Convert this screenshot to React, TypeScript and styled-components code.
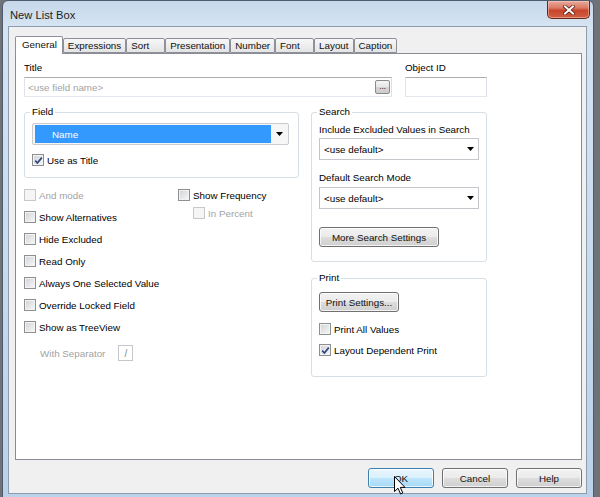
import React from "react";
import styled, { createGlobalStyle } from "styled-components";

const GlobalStyle = createGlobalStyle`
  html, body { margin: 0; padding: 0; background: #6f7378; overflow: hidden; }
  body { font-family: "Liberation Sans", Arial, sans-serif; font-size: 9.8px; color: #000; }
  * { box-sizing: border-box; }
`;

const Window = styled.div`
  width: 592px;
  height: 502px;
  margin-left: 2px;
  border: 1px solid #4d5b6c;
  border-radius: 6px 6px 0 0;
  background: linear-gradient(to bottom, #c6d8eb 0px, #d6e4f2 26px, #c6d9ed 60%, #bbd2ea 100%);
  display: flex;
  flex-direction: column;
  padding: 0 6px 7px 5px;
`;

const TitleBar = styled.div`
  height: 25px;
  display: flex;
  align-items: flex-start;
  justify-content: space-between;
  padding-left: 2px;
  flex-shrink: 0;
`;

const TitleText = styled.div`
  font-size: 11.2px;
  line-height: 13px;
  margin-top: 8px;
  color: #1b1f26;
`;

const CloseButton = styled.div`
  width: 43px;
  height: 18px;
  margin-right: -3px;
  border: 1px solid #6b2418;
  border-top: none;
  border-radius: 0 0 5px 5px;
  background: linear-gradient(to bottom, #e8aa9c 0%, #dc7b66 40%, #c8452b 55%, #d0603f 100%);
  box-shadow: inset 0 0 0 1px rgba(255, 220, 210, 0.45);
  display: flex;
  align-items: center;
  justify-content: center;
`;

const Client = styled.div`
  flex: 1;
  background: #f0f0f0;
  border: 1px solid #8d9db0;
  display: flex;
  flex-direction: column;
  padding: 9px 4px 5px 6px;
`;

const TabStrip = styled.div`
  display: flex;
  align-items: flex-end;
  height: 18px;
  margin-bottom: -1px;
  position: relative;
  z-index: 1;
`;

const Tab = styled.div<{ $active?: boolean }>`
  min-width: 39px;
  height: ${(p) => (p.$active ? 18 : 15)}px;
  margin-bottom: ${(p) => (p.$active ? 0 : 1)}px;
  padding: ${(p) => (p.$active ? "0 5px 2px 6px" : "0 4px 0 4px")};
  border: 1px solid #8e9199;
  border-bottom: ${(p) => (p.$active ? "none" : "1px solid #8e9199")};
  border-radius: 2px 2px 0 0;
  background: ${(p) => (p.$active ? "#ffffff" : "linear-gradient(to bottom, #f7f7f7, #e4e4e4)")};
  display: flex;
  align-items: center;
  white-space: nowrap;
  line-height: 12px;
  color: #111;
`;

const Panel = styled.div`
  flex: 1;
  background: #ffffff;
  border: 1px solid #898c95;
  padding: 7px 0 0 8px;
  display: flex;
  flex-direction: column;
`;

const TopRow = styled.div`
  display: flex;
  gap: 13px;
`;

const LabeledBlock = styled.div<{ $w: number }>`
  width: ${(p) => p.$w}px;
  display: flex;
  flex-direction: column;
`;

const FieldLabel = styled.div`
  line-height: 13px;
  margin-bottom: 3px;
`;

const TextBox = styled.div<{ $muted?: boolean }>`
  height: 20px;
  border: 1px solid;
  border-color: #abadb3 #dbdfe6 #e3e9ef #e2e3ea;
  background: #fff;
  display: flex;
  align-items: center;
  padding: 0 1px 0 3px;
  color: ${(p) => (p.$muted ? "#a3a3a3" : "#000")};
`;

const TextBoxValue = styled.span`
  flex: 1;
`;

const DotsButton = styled.div`
  width: 15px;
  height: 14px;
  border: 1px solid #8a8a8a;
  border-radius: 2px;
  background: linear-gradient(to bottom, #f4f4f4 0%, #e6e6e6 50%, #d6d6d6 51%, #cccccc 100%);
  font-size: 9px;
  line-height: 9px;
  padding-top: 1px;
  text-align: center;
  color: #333;
  letter-spacing: -0.3px;
`;

const Columns = styled.div`
  display: flex;
  gap: 12px;
  margin-top: 9px;
`;

const Column = styled.div<{ $w: number }>`
  width: ${(p) => p.$w}px;
  display: flex;
  flex-direction: column;
`;

const GroupBox = styled.fieldset<{ $pad: string; $mt?: number }>`
  margin: ${(p) => p.$mt ?? 0}px 0 0 0;
  padding: ${(p) => p.$pad};
  border: 1px solid #d5dfe5;
  border-radius: 3px;
  min-width: 0;
  display: flex;
  flex-direction: column;
  align-items: flex-start;
`;

const Legend = styled.legend`
  padding: 0 2px;
  margin-left: -2px;
  line-height: 12px;
  font-size: 9.8px;
`;

const FieldCombo = styled.div`
  align-self: stretch;
  height: 22px;
  border: 1px solid #c9cbd0;
  border-radius: 2px;
  background: #f6f6f6;
  padding: 1px 0 1px 2px;
  display: flex;
`;

const Selection = styled.div`
  flex: 1;
  background: #3399ff;
  color: #fff;
  padding-left: 17px;
  display: flex;
  align-items: center;
`;

const ArrowCell = styled.div<{ $w: number }>`
  width: ${(p) => p.$w}px;
  display: flex;
  align-items: center;
  justify-content: center;
`;

const Combo = styled.div`
  align-self: stretch;
  height: 22px;
  border: 1px solid #c4c6cb;
  background: #fff;
  padding-left: 4px;
  display: flex;
  align-items: center;
`;

const ComboValue = styled.span`
  flex: 1;
`;

const SmallLabel = styled.div<{ $mt?: number; $mb?: number }>`
  line-height: 12px;
  margin-top: ${(p) => p.$mt ?? 0}px;
  margin-bottom: ${(p) => p.$mb ?? 0}px;
  white-space: nowrap;
`;

const Options = styled.div`
  display: flex;
  margin-top: 6px;
`;

const OptionList = styled.div<{ $w?: number }>`
  width: ${(p) => (p.$w ? `${p.$w}px` : "auto")};
  display: flex;
  flex-direction: column;
`;

const CheckRow = styled.div<{ $h?: number; $mt?: number; $indent?: number; $disabled?: boolean }>`
  height: ${(p) => p.$h ?? 22}px;
  margin-top: ${(p) => p.$mt ?? 0}px;
  padding-left: ${(p) => p.$indent ?? 0}px;
  display: flex;
  align-items: center;
  gap: 3px;
  white-space: nowrap;
  color: ${(p) => (p.$disabled ? "#a3a3a3" : "#000")};
`;

const Box = styled.span<{ $disabled?: boolean }>`
  width: 12px;
  height: 12px;
  flex-shrink: 0;
  border: 1px solid ${(p) => (p.$disabled ? "#c8c8c8" : "#8e8f8f")};
  background: ${(p) =>
    p.$disabled ? "#f5f5f5" : "linear-gradient(135deg, #cfd2d7 0%, #e6e7e9 55%, #f8f8f8 100%)"};
  box-shadow: inset 0 0 0 1px ${(p) => (p.$disabled ? "#f5f5f5" : "#f3f3f3")};
  display: flex;
  align-items: center;
  justify-content: center;
`;

const SepRow = styled.div`
  height: 22px;
  margin-top: 4px;
  padding-left: 16px;
  display: flex;
  align-items: center;
  gap: 13px;
  color: #a3a3a3;
`;

const SepInput = styled.div`
  width: 15px;
  height: 16px;
  border: 1px solid #c5c7cc;
  background: #fff;
  display: flex;
  align-items: center;
  justify-content: center;
  color: #8a8a8a;
  font-size: 10px;
`;

const PushButton = styled.div<{ $w: number; $mt?: number; $primary?: boolean }>`
  width: ${(p) => p.$w}px;
  height: 20px;
  margin-top: ${(p) => p.$mt ?? 0}px;
  border: 1px solid ${(p) => (p.$primary ? "#3c7fb1" : "#707070")};
  border-radius: 3px;
  background: ${(p) =>
    p.$primary
      ? "linear-gradient(to bottom, #eaf6fd 0%, #d9f0fc 50%, #bee6fd 51%, #a7d9f5 100%)"
      : "linear-gradient(to bottom, #f2f2f2 0%, #ebebeb 50%, #dddddd 51%, #cfcfcf 100%)"};
  box-shadow: inset 0 0 0 1px rgba(255, 255, 255, 0.75);
  display: flex;
  align-items: center;
  justify-content: center;
  position: relative;
  flex-shrink: 0;
  color: #111;
`;

const ButtonRow = styled.div`
  display: flex;
  justify-content: flex-end;
  gap: 8px;
  margin-top: 8px;
  height: 20px;
  flex-shrink: 0;
`;

const Cursor = styled.svg`
  position: absolute;
  left: 25px;
  top: 7px;
`;

const DownArrow = () => (
  <svg width="7" height="4" viewBox="0 0 7 4">
    <path d="M0 0 H7 L3.5 4 Z" fill="#000" />
  </svg>
);

const Check = ({ label, checked, disabled, h, mt, indent }: {
  label: string; checked?: boolean; disabled?: boolean; h?: number; mt?: number; indent?: number;
}) => (
  <CheckRow $h={h} $mt={mt} $indent={indent} $disabled={disabled}>
    <Box $disabled={disabled}>
      {checked && (
        <svg width="9" height="9" viewBox="0 0 9 9">
          <path d="M1.2 4.6 L3.4 7 L7.8 1.6" fill="none" stroke="#31457e" strokeWidth="1.7" />
        </svg>
      )}
    </Box>
    <span>{label}</span>
  </CheckRow>
);

const tabs = ["General", "Expressions", "Sort", "Presentation", "Number", "Font", "Layout", "Caption"];

export default function App() {
  return (
    <>
      <GlobalStyle />
      <Window>
        <TitleBar>
          <TitleText>New List Box</TitleText>
          <CloseButton>
            <svg width="12" height="10" viewBox="0 0 12 10">
              <path d="M2 1.5 L10 8.5 M10 1.5 L2 8.5" stroke="#5a1d12" strokeWidth="3.6" strokeLinecap="square" />
              <path d="M2 1.5 L10 8.5 M10 1.5 L2 8.5" stroke="#ffffff" strokeWidth="2" strokeLinecap="square" />
            </svg>
          </CloseButton>
        </TitleBar>
        <Client>
          <TabStrip>
            {tabs.map((t, i) => (
              <Tab key={t} $active={i === 0}>{t}</Tab>
            ))}
          </TabStrip>
          <Panel>
            <TopRow>
              <LabeledBlock $w={368}>
                <FieldLabel>Title</FieldLabel>
                <TextBox $muted>
                  <TextBoxValue>&lt;use field name&gt;</TextBoxValue>
                  <DotsButton>...</DotsButton>
                </TextBox>
              </LabeledBlock>
              <LabeledBlock $w={82}>
                <FieldLabel>Object ID</FieldLabel>
                <TextBox />
              </LabeledBlock>
            </TopRow>
            <Columns>
              <Column $w={275}>
                <GroupBox $pad="5px 9px 10px 7px">
                  <Legend>Field</Legend>
                  <FieldCombo>
                    <Selection>Name</Selection>
                    <ArrowCell $w={17}><DownArrow /></ArrowCell>
                  </FieldCombo>
                  <Check label="Use as Title" checked h={14} mt={8} />
                </GroupBox>
                <Options>
                  <OptionList $w={154}>
                    <Check label="And mode" disabled />
                    <Check label="Show Alternatives" />
                    <Check label="Hide Excluded" />
                    <Check label="Read Only" />
                    <Check label="Always One Selected Value" />
                    <Check label="Override Locked Field" />
                    <Check label="Show as TreeView" />
                    <SepRow>
                      <span>With Separator</span>
                      <SepInput>/</SepInput>
                    </SepRow>
                  </OptionList>
                  <OptionList>
                    <Check label="Show Frequency" />
                    <Check label="In Percent" disabled h={14} indent={15} />
                  </OptionList>
                </Options>
              </Column>
              <Column $w={176}>
                <GroupBox $pad="6px 7px 14px 7px">
                  <Legend>Search</Legend>
                  <SmallLabel $mb={2}>Include Excluded Values in Search</SmallLabel>
                  <Combo>
                    <ComboValue>&lt;use default&gt;</ComboValue>
                    <ArrowCell $w={16}><DownArrow /></ArrowCell>
                  </Combo>
                  <SmallLabel $mt={12} $mb={3}>Default Search Mode</SmallLabel>
                  <Combo>
                    <ComboValue>&lt;use default&gt;</ComboValue>
                    <ArrowCell $w={16}><DownArrow /></ArrowCell>
                  </Combo>
                  <PushButton $w={120} $mt={18}>More Search Settings</PushButton>
                </GroupBox>
                <GroupBox $pad="8px 7px 19px 7px" $mt={10}>
                  <Legend>Print</Legend>
                  <PushButton $w={80}>Print Settings...</PushButton>
                  <Check label="Print All Values" h={14} mt={10} />
                  <Check label="Layout Dependent Print" checked h={14} mt={7} />
                </GroupBox>
              </Column>
            </Columns>
          </Panel>
          <ButtonRow>
            <PushButton $w={66} $primary>
              OK
              <Cursor width="12" height="19" viewBox="0 0 12 19">
                <path d="M0.5 0.5 L0.5 15.5 L4 12.2 L6.6 18 L8.8 17 L6.3 11.4 L11 11.4 Z" fill="#fff" stroke="#000" strokeWidth="1" strokeLinejoin="round" />
              </Cursor>
            </PushButton>
            <PushButton $w={66}>Cancel</PushButton>
            <PushButton $w={66}>Help</PushButton>
          </ButtonRow>
        </Client>
      </Window>
    </>
  );
}
